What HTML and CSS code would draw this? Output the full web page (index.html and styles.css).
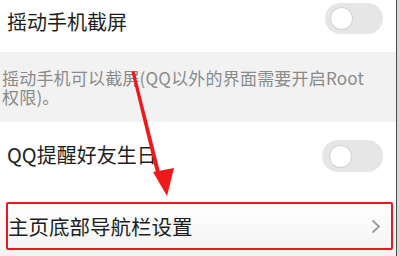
FILE: index.html
```html
<!DOCTYPE html>
<html>
<head>
<meta charset="utf-8">
<link rel="stylesheet" href="styles.css">
</head>
<body>
<div class="frame">
  <div class="content">
    <div class="row row1">
      <span class="title">摇动手机截屏</span>
      <span class="toggle"><span class="knob"></span></span>
    </div>
    <div class="desc">摇动手机可以截屏(QQ以外的界面需要开启Root权限)。</div>
    <div class="row row2">
      <span class="title">QQ提醒好友生日</span>
      <span class="toggle wide"><span class="knob"></span></span>
    </div>
    <div class="row3">
      <div class="nav-item">
        <span class="title">主页底部导航栏设置</span>
        <svg class="chev" width="10" height="15" viewBox="0 0 10 15"><path d="M1.5 1.5 L8 7.5 L1.5 13.5" fill="none" stroke="#9a9a9a" stroke-width="1.8"/></svg>
      </div>
    </div>
  </div>
  <div class="edge"></div>
  <svg class="arrow" width="400" height="256" viewBox="0 0 400 256">
    <path d="M131.5 72 L134.5 71 L161 176 L157 177 Z" fill="#f01818"/>
    <path d="M153 172 L174 168 L167 196 Z" fill="#f01818"/>
  </svg>
</div>
</body>
</html>
```
FILE: styles.css
```css
html, body {
  margin: 0;
  padding: 0;
  background: #fff;
}
.frame {
  position: relative;
  width: 400px;
  height: 256px;
  overflow: hidden;
  display: flex;
  font-family: "Noto Sans CJK SC", "Noto Sans", sans-serif;
}
.content {
  width: 396px;
  display: flex;
  flex-direction: column;
}
.edge {
  width: 3px;
  border-left: 1px solid #4a4a4a;
  background: #d8d8d8;
}
.row {
  display: flex;
  justify-content: space-between;
  align-items: flex-start;
  background: #fff;
  box-sizing: border-box;
}
.title {
  font-size: 20px;
  line-height: 24px;
  color: #1e1e1e;
}
.row1 {
  height: 52px;
  padding: 3px 13px 0 7px;
}
.row1 .title {
  margin-top: 7px;
}
.row2 {
  height: 78px;
  padding: 18px 13px 0 7px;
}
.row2 .title {
  margin-top: 3px;
}
.toggle {
  width: 58px;
  height: 31px;
  border-radius: 16px;
  background: #e6e6e6;
  display: flex;
  align-items: center;
  padding-left: 6px;
  box-sizing: border-box;
}
.toggle.wide {
  width: 61px;
  height: 32px;
  padding-left: 8px;
}
.knob {
  width: 21px;
  height: 21px;
  border-radius: 50%;
  background: #fff;
  box-shadow: 0 0 0 1px #d4d4d4;
}
.desc {
  height: 70px;
  box-sizing: border-box;
  background: #f2f2f2;
  padding: 16px 20px 0 2px;
  font-size: 17px;
  line-height: 19px;
  letter-spacing: 0.2px;
  color: #8a8a8a;
}
.row3 {
  flex: 1;
  padding: 2px 3px 0 6px;
  background: linear-gradient(#fff, #f3f3f3);
}
.nav-item {
  height: 48px;
  box-sizing: border-box;
  border: 2px solid #e8181c;
  border-radius: 2px;
  display: flex;
  align-items: center;
  justify-content: space-between;
  padding: 0 10px 0 0;
}
.nav-item .title {
  font-size: 20.5px;
}
.chev {
  display: block;
}
.arrow {
  position: absolute;
  left: 0;
  top: 0;
}
```
